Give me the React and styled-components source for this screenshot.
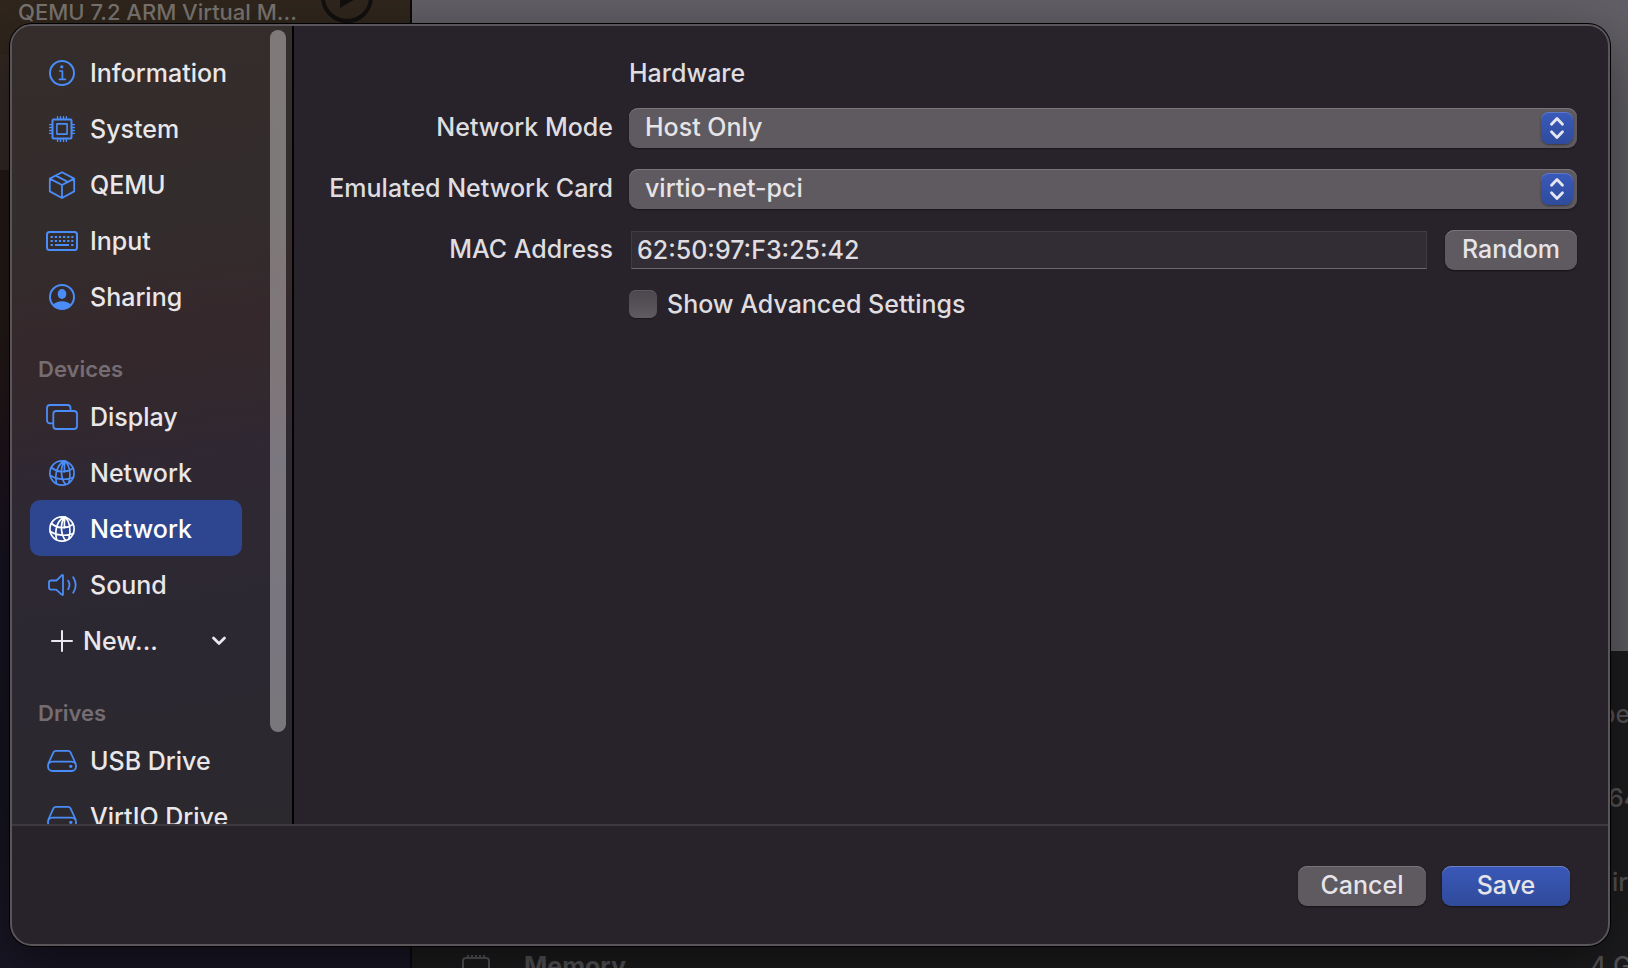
import React from "react";
import styled, { createGlobalStyle, css } from "styled-components";

const GlobalStyle = createGlobalStyle`
  *, *::before, *::after { box-sizing: border-box; }
  body { margin: 0; background: #1a181b; }
  body, button, input, select {
    font-family: Inter, "Liberation Sans", sans-serif;
    font-size: 25px;
    font-weight: 450;
    line-height: 32px;
  }
`;

/* ---------- window behind the sheet ---------- */

const Window = styled.div`
  position: relative;
  display: flex;
  height: 100vh;
  min-height: 600px;
  overflow: hidden;
`;

const Library = styled.aside`
  flex: 0 0 412px;
  display: flex;
  flex-direction: column;
  border-right: 2px solid #0b0a0b;
  background: linear-gradient(#241a13 0, #241a17 330px, #20151d 460px, #171422 560px, #16151f 800px, #1a1726 100%);
`;

const LibraryRow = styled.div`
  display: flex;
  justify-content: space-between;
  align-items: flex-end;
  height: 54px;
  padding: 0 37px 28px 18px;
  background: #30261d;
  color: #7b7571;
  font-size: 22px;
  line-height: 28px;
  white-space: nowrap;

  svg { flex: none; margin-bottom: 3px; }
`;

const LibrarySelection = styled.div`
  height: 116px;
  background: #342a25;
`;

const Details = styled.main`
  flex: 1;
  min-width: 0;
  display: flex;
  flex-direction: column;
  background: #1d1c1e;
`;

const Preview = styled.div`
  flex: 0 0 651px;
  background: #626066;
`;

const Facts = styled.div`
  display: flex;
  flex-direction: column;
  padding-top: 21px;
`;

const Fact = styled.div`
  display: flex;
  justify-content: space-between;
  align-items: center;
  flex: 0 0 84px;
  padding-left: 50px;
  color: #59575a;
  white-space: nowrap;
`;

const FactName = styled.span`
  display: flex;
  align-items: center;
  gap: 34px;
  font-weight: 700;
`;

const FactValue = styled.span`
  width: ${(p) => p.$width}px;
  margin-left: auto;
`;

/* ---------- sheet ---------- */

const Sheet = styled.form`
  position: absolute;
  inset: 24px 18px 22px 10px;
  display: flex;
  flex-direction: column;
  overflow: hidden;
  border: 2px solid #59555b;
  border-radius: 22px;
  background: #28232a;
  color: #dfdde0;
  box-shadow: 0 0 0 1px #000, 0 20px 60px rgba(0, 0, 0, 0.5);
`;

const Body = styled.div`
  flex: 1;
  min-height: 0;
  display: flex;
`;

const Sidebar = styled.nav`
  position: relative;
  flex: 0 0 282px;
  overflow: hidden;
  padding: 18px 50px 0 18px;
  border-right: 2px solid #000;
  background: linear-gradient(172deg, #342d2c 0, #332c2c 27%, #35282c 38%, #33282d 46%, #2f2833 56%, #2c2832 72%, #2b282e 100%);
`;

const Thumb = styled.div`
  position: absolute;
  top: 4px;
  right: 6px;
  width: 16px;
  height: 88%;
  border-radius: 8px;
  background: rgba(255, 255, 255, 0.37);
`;

const Section = styled.h2`
  height: 64px;
  margin: 0;
  padding: 31px 8px 0;
  color: #756d72;
  font-size: 22px;
  font-weight: 600;
  line-height: 28px;
`;

const Item = styled.button`
  display: flex;
  align-items: center;
  gap: ${(p) => (p.$tight ? 5 : 12)}px;
  width: 100%;
  height: 56px;
  padding: 2px 15px 0 16px;
  border: 0;
  border-radius: 10px;
  background: transparent;
  color: #e9e7e9;
  text-align: left;
  white-space: nowrap;

  svg { flex: none; color: ${(p) => (p.$tight ? "#e9e7f0" : "#4b8df8")}; }

  ${(p) =>
    p.$selected &&
    css`
      background: #2d468f;
      color: #fff;
      svg { color: #fff; }
    `}
`;

const ItemText = styled.span`
  flex: 1;
`;

const Settings = styled.section`
  flex: 1;
  min-width: 0;
  display: grid;
  grid-template-columns: 287px 1fr;
  grid-template-rows: 56px 56px 66px 56px 52px;
  column-gap: 16px;
  align-items: center;
  align-content: start;
  padding: 18px 31px 0 32px;
`;

const Heading = styled.h1`
  grid-column: 2;
  margin: 0;
  padding-top: 2px;
  font-size: 25px;
  font-weight: 450;
  line-height: 32px;
`;

const Label = styled.label`
  padding-bottom: 2px;
  text-align: right;
  white-space: nowrap;
`;

const PopUp = styled.div`
  position: relative;
  height: 40px;
`;

const Select = styled.select`
  appearance: none;
  display: block;
  width: 100%;
  height: 40px;
  padding: 0 48px 2px 16px;
  border: 0;
  border-radius: 9px;
  background: #5f5a60;
  box-shadow: inset 0 1px 0 #7a757b, 0 1px 2px rgba(0, 0, 0, 0.4);
  color: #e6e4e7;
`;

const Stepper = styled.span`
  position: absolute;
  top: 4px;
  right: 4px;
  display: flex;
  width: 32px;
  height: 32px;
  border-radius: 8px;
  background: linear-gradient(#3a5abb, #2f4b9c);
  box-shadow: inset 0 1px 0 #6079c2, 0 1px 2px rgba(0, 0, 0, 0.4);
  pointer-events: none;
`;

const AddressRow = styled.div`
  display: flex;
  align-items: center;
  gap: 18px;
  padding-left: 2px;
`;

const TextInput = styled.input`
  flex: 1;
  min-width: 0;
  height: 38px;
  padding: 0 5px;
  border: 1px solid #403b42;
  border-bottom-color: #6a666b;
  border-radius: 0;
  outline: 0;
  background: #322d34;
  color: #dfdde0;
`;

const Button = styled.button`
  width: ${(p) => p.$width || 128}px;
  height: 40px;
  padding: 0 0 2px;
  border: 0;
  border-radius: 9px;
  background: ${(p) => (p.$primary ? "linear-gradient(#3a58b8, #304b9b)" : "#5f5a60")};
  box-shadow: inset 0 1px 0 ${(p) => (p.$primary ? "#6c82c6" : "#7a757b")}, 0 1px 2px rgba(0, 0, 0, 0.5);
  color: #e6e4e9;
`;

const CheckRow = styled.label`
  grid-column: 2;
  display: flex;
  align-items: center;
  gap: 10px;
`;

const Checkbox = styled.input`
  appearance: none;
  width: 28px;
  height: 28px;
  margin: 0;
  border-radius: 7px;
  background: linear-gradient(#4a464c, #5f5b61);
  box-shadow: inset 0 1px 0 #5c585e, 0 1px 1px rgba(0, 0, 0, 0.3);
`;

const Footer = styled.footer`
  flex: 0 0 120px;
  display: flex;
  justify-content: flex-end;
  gap: 16px;
  padding: 40px 38px 0;
  border-top: 2px solid #3d393f;
`;

/* ---------- icons ---------- */

const Icon = ({ children, width = 2 }) => (
  <svg width="32" height="32" viewBox="0 0 32 32" fill="none" stroke="currentColor" strokeWidth={width} strokeLinecap="round" strokeLinejoin="round" aria-hidden="true">
    {children}
  </svg>
);

const InfoIcon = () => (
  <Icon>
    <circle cx="16" cy="16" r="12" />
    <circle cx="15.8" cy="9.8" r="1.6" fill="currentColor" stroke="none" />
    <path d="M13.8 14H16.4V22.3M13.4 22.3H19.4" strokeWidth="1.7" />
  </Icon>
);

const pins = [11.6, 14.5, 17.5, 20.4];

const ChipIcon = () => (
  <Icon>
    <rect x="6.5" y="6.5" width="19" height="19" rx="1" />
    <rect x="10.9" y="10.9" width="10.2" height="10.2" strokeWidth="1.6" />
    {pins.map((p) => (
      <path key={p} d={`M${p} 3.6V6M${p} 26V28.4M3.6 ${p}H6M26 ${p}H28.4`} strokeWidth="1.4" />
    ))}
  </Icon>
);

const BoxIcon = () => (
  <Icon width={1.8}>
    <path d="M16 3.2 28.2 9.6V22.4L16 29 3.8 22.4V9.6ZM3.8 9.6 16 16 28.2 9.6M16 16V29M9.8 6.6 22 13" />
  </Icon>
);

const KeyboardIcon = () => (
  <Icon>
    <rect x="1" y="7" width="30" height="18" rx="2.5" />
    <path d="M4.6 12H27.4M4.6 16H27.4" strokeWidth="2.2" strokeDasharray="2.3 1.84" strokeLinecap="butt" />
    <path d="M4.6 20H6.9M9 20H23M25.1 20H27.4" strokeWidth="2.2" strokeLinecap="butt" />
  </Icon>
);

const PersonIcon = () => (
  <Icon>
    <circle cx="16" cy="16" r="12" />
    <ellipse cx="16" cy="13" rx="4.3" ry="4.9" fill="currentColor" stroke="none" />
    <path d="M7.4 23.8C9 21.6 12 20.2 16 20.2S23 21.6 24.6 23.8C22.5 26.8 19.5 28 16 28S9.5 26.8 7.4 23.8Z" fill="currentColor" stroke="none" />
  </Icon>
);

const ScreensIcon = () => (
  <Icon width={1.8}>
    <path d="M7 22.4H4A3 3 0 0 1 1 19.4V7A3 3 0 0 1 4 4H21.500A3 3 0 0 1 24.500 7V9" />
    <rect x="7.3" y="10" width="23.7" height="18" rx="3" />
  </Icon>
);

const GlobeIcon = () => (
  <Icon width={1.7}>
    <circle cx="16" cy="16" r="12.1" />
    <path d="M17.5 4C11 9 8.500 16 10.500 26.500M18.500 4C14.500 10 14 20 19.500 27.500M19.500 4C23.500 9 25 17 23 25.500M19 4C18.300 8 18.200 11 18.500 14.800M5.500 10.500C11 15.500 20 16 27 11.500M4.200 18.500C10 22.500 20 23.500 27.500 20.500" />
  </Icon>
);

const SpeakerIcon = () => (
  <Icon width={1.8}>
    <path d="M10.500 11.500 16 6.200Q17 5.600 17 6.800V25.200Q17 26.400 16 25.800L10.200 20.600H5Q3 20.600 3 18.600V13.400Q3 11.500 5 11.500ZM22.200 11.800Q24.700 16 22.200 20.200M27.200 8.200Q32.200 16 27.200 23.800" />
  </Icon>
);

const DriveIcon = () => (
  <Icon width={1.8}>
    <path d="M2.400 18.500 7.200 7.800Q8.100 5.900 10.100 5.900H21.900Q23.900 5.900 24.800 7.800L29.600 18.500" />
    <rect x="2" y="16.6" width="28" height="9.4" rx="4.4" />
    <circle cx="24.8" cy="21.3" r="1.6" fill="currentColor" stroke="none" />
  </Icon>
);

const PlusIcon = () => (
  <Icon>
    <path d="M16 6V26M6 16H26" />
  </Icon>
);

const ChevronIcon = () => (
  <svg width="16" height="16" viewBox="0 0 16 16" fill="none" stroke="currentColor" strokeWidth="2.8" strokeLinecap="round" strokeLinejoin="round" aria-hidden="true">
    <path d="M2.500 5 8 10.500 13.500 5" />
  </svg>
);

const StepperIcon = () => (
  <svg width="32" height="32" viewBox="0 0 32 32" fill="none" stroke="#e4e6f2" strokeWidth="2.8" strokeLinecap="round" strokeLinejoin="round" aria-hidden="true">
    <path d="M10.500 12.200 16 6.500 21.500 12.200M10.500 19.800 16 25.500 21.500 19.800" />
  </svg>
);

const PlayIcon = () => (
  <svg width="52" height="52" viewBox="0 0 52 52" fill="none" stroke="#12100f" strokeWidth="4" aria-hidden="true">
    <circle cx="26" cy="26" r="24" />
    <path d="M19 17V37L36 27Z" fill="#12100f" stroke="none" />
  </svg>
);

const MemoryIcon = () => (
  <svg width="28" height="32" viewBox="0 0 28 32" fill="none" stroke="currentColor" strokeWidth="2" aria-hidden="true">
    <rect x="1" y="8" width="26" height="20" rx="3" />
    <path d="M6 5V8M10 5V8M14 5V8M18 5V8M22 5V8" />
  </svg>
);

/* ---------- content ---------- */

const general = [
  ["Information", InfoIcon],
  ["System", ChipIcon],
  ["QEMU", BoxIcon],
  ["Input", KeyboardIcon],
  ["Sharing", PersonIcon],
];

const devices = [
  ["Display", ScreensIcon],
  ["Network", GlobeIcon],
  ["Network", GlobeIcon, true],
  ["Sound", SpeakerIcon],
];

const drives = [
  ["USB Drive", DriveIcon],
  ["VirtIO Drive", DriveIcon],
];

const Items = ({ list }) =>
  list.map(([name, Glyph, selected], i) => (
    <Item key={i} type="button" $selected={selected} aria-current={selected ? "page" : undefined}>
      <Glyph />
      <ItemText>{name}</ItemText>
    </Item>
  ));

const PopUpButton = ({ id, value }) => (
  <PopUp>
    <Select id={id} defaultValue={value}>
      <option>{value}</option>
    </Select>
    <Stepper>
      <StepperIcon />
    </Stepper>
  </PopUp>
);

export default function App() {
  return (
    <>
      <GlobalStyle />
      <Window>
        <Library>
          <LibraryRow>
            <span>QEMU 7.2 ARM Virtual M...</span>
            <PlayIcon />
          </LibraryRow>
          <LibrarySelection />
        </Library>
        <Details>
          <Preview />
          <Facts>
            <Fact><FactValue $width={28}>pe</FactValue></Fact>
            <Fact><FactValue $width={20}>64</FactValue></Fact>
            <Fact><FactValue $width={16}>ir</FactValue></Fact>
            <Fact>
              <FactName><MemoryIcon />Memory</FactName>
              <FactValue $width={38}>4 G</FactValue>
            </Fact>
          </Facts>
        </Details>

        <Sheet role="dialog" aria-label="Hardware" onSubmit={(e) => e.preventDefault()}>
          <Body>
            <Sidebar>
              <Items list={general} />
              <Section>Devices</Section>
              <Items list={devices} />
              <Item type="button" $tight>
                <PlusIcon />
                <ItemText>New...</ItemText>
                <ChevronIcon />
              </Item>
              <Section>Drives</Section>
              <Items list={drives} />
              <Thumb />
            </Sidebar>
            <Settings>
              <Heading>Hardware</Heading>
              <Label htmlFor="mode">Network Mode</Label>
              <PopUpButton id="mode" value="Host Only" />
              <Label htmlFor="card">Emulated Network Card</Label>
              <PopUpButton id="card" value="virtio-net-pci" />
              <Label htmlFor="mac">MAC Address</Label>
              <AddressRow>
                <TextInput id="mac" type="text" defaultValue="62:50:97:F3:25:42" />
                <Button type="button" $width={132}>Random</Button>
              </AddressRow>
              <CheckRow>
                <Checkbox type="checkbox" />
                Show Advanced Settings
              </CheckRow>
            </Settings>
          </Body>
          <Footer>
            <Button type="button">Cancel</Button>
            <Button type="submit" $primary>Save</Button>
          </Footer>
        </Sheet>
      </Window>
    </>
  );
}
